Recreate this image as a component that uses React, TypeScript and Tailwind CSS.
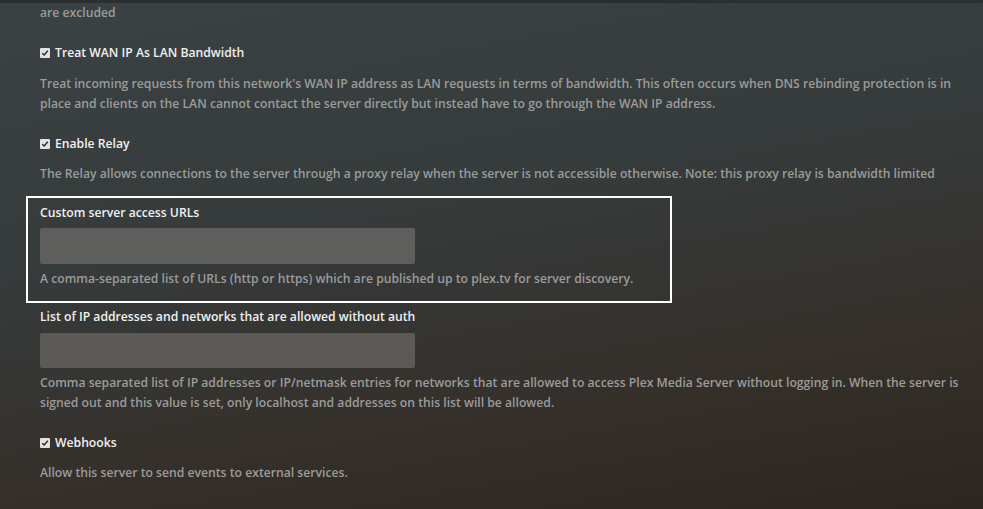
import React from "react";

function Check() {
  return (
    <span className="mr-[5px] inline-flex h-[10px] w-[10px] items-center justify-center rounded-[1px] bg-[#e2e2e2]">
      <svg viewBox="0 0 10 10" className="h-[8px] w-[8px]">
        <path d="M1.5 5.2 L4 7.5 L8.5 2.2" fill="none" stroke="#2b2b2b" strokeWidth="1.8" />
      </svg>
    </span>
  );
}

function Toggle({ label, desc }: { label: string; desc: string }) {
  return (
    <div className="mt-[20px]">
      <div className="flex items-center leading-[20px] text-[#f0f0f0]">
        <Check />
        {label}
      </div>
      <p className="mt-[10px] leading-[20px] text-[#9b9b9b]">{desc}</p>
    </div>
  );
}

export default function App() {
  return (
    <div
      className="h-[509px] w-[983px] overflow-hidden border-t-[3px] border-[#2a2f31] bg-[linear-gradient(170deg,#3b4244_0%,#363b3b_40%,#352f2a_75%,#2c2621_100%)] pl-[40px] pr-[18px] text-[12.2px] font-semibold"
      style={{ fontFamily: '"Open Sans", sans-serif' }}
    >
      <p className="leading-[20px] text-[#9b9b9b]">are excluded</p>

      <div className="mt-[20px]">
        <div className="flex items-center leading-[20px] text-[#f0f0f0]">
          <Check />
          Treat WAN IP As LAN Bandwidth
        </div>
        <p className="mt-[11px] leading-[20px] text-[#9b9b9b]">
          Treat incoming requests from this network's WAN IP address as LAN requests in terms of bandwidth. This often occurs when DNS rebinding protection is in place and clients on the LAN cannot contact the server directly but instead have to go through the WAN IP address.
        </p>
      </div>

      <Toggle
        label="Enable Relay"
        desc="The Relay allows connections to the server through a proxy relay when the server is not accessible otherwise. Note: this proxy relay is bandwidth limited"
      />

      <div className="-mx-[14px] mt-[12px] w-[646px] border-2 border-white px-[12px] pb-[12px] pt-[5px]">
        <div className="leading-[20px] text-[#f0f0f0]">Custom server access URLs</div>
        <div className="mt-[5px] h-[36px] w-[375px] rounded-[2px] bg-[#5e5e5c]" />
        <p className="mt-[5px] leading-[20px] text-[#9b9b9b]">
          A comma-separated list of URLs (http or https) which are published up to plex.tv for server discovery.
        </p>
      </div>

      <div className="mt-[4px]">
        <div className="leading-[20px] text-[#f0f0f0]">List of IP addresses and networks that are allowed without auth</div>
        <div className="mt-[6px] h-[35px] w-[375px] rounded-[2px] bg-[#5c5a57]" />
        <p className="mt-[5px] leading-[20px] text-[#9b9b9b]">
          Comma separated list of IP addresses or IP/netmask entries for networks that are allowed to access Plex Media Server without logging in. When the server is signed out and this value is set, only localhost and addresses on this list will be allowed.
        </p>
      </div>

      <Toggle label="Webhooks" desc="Allow this server to send events to external services." />
    </div>
  );
}
